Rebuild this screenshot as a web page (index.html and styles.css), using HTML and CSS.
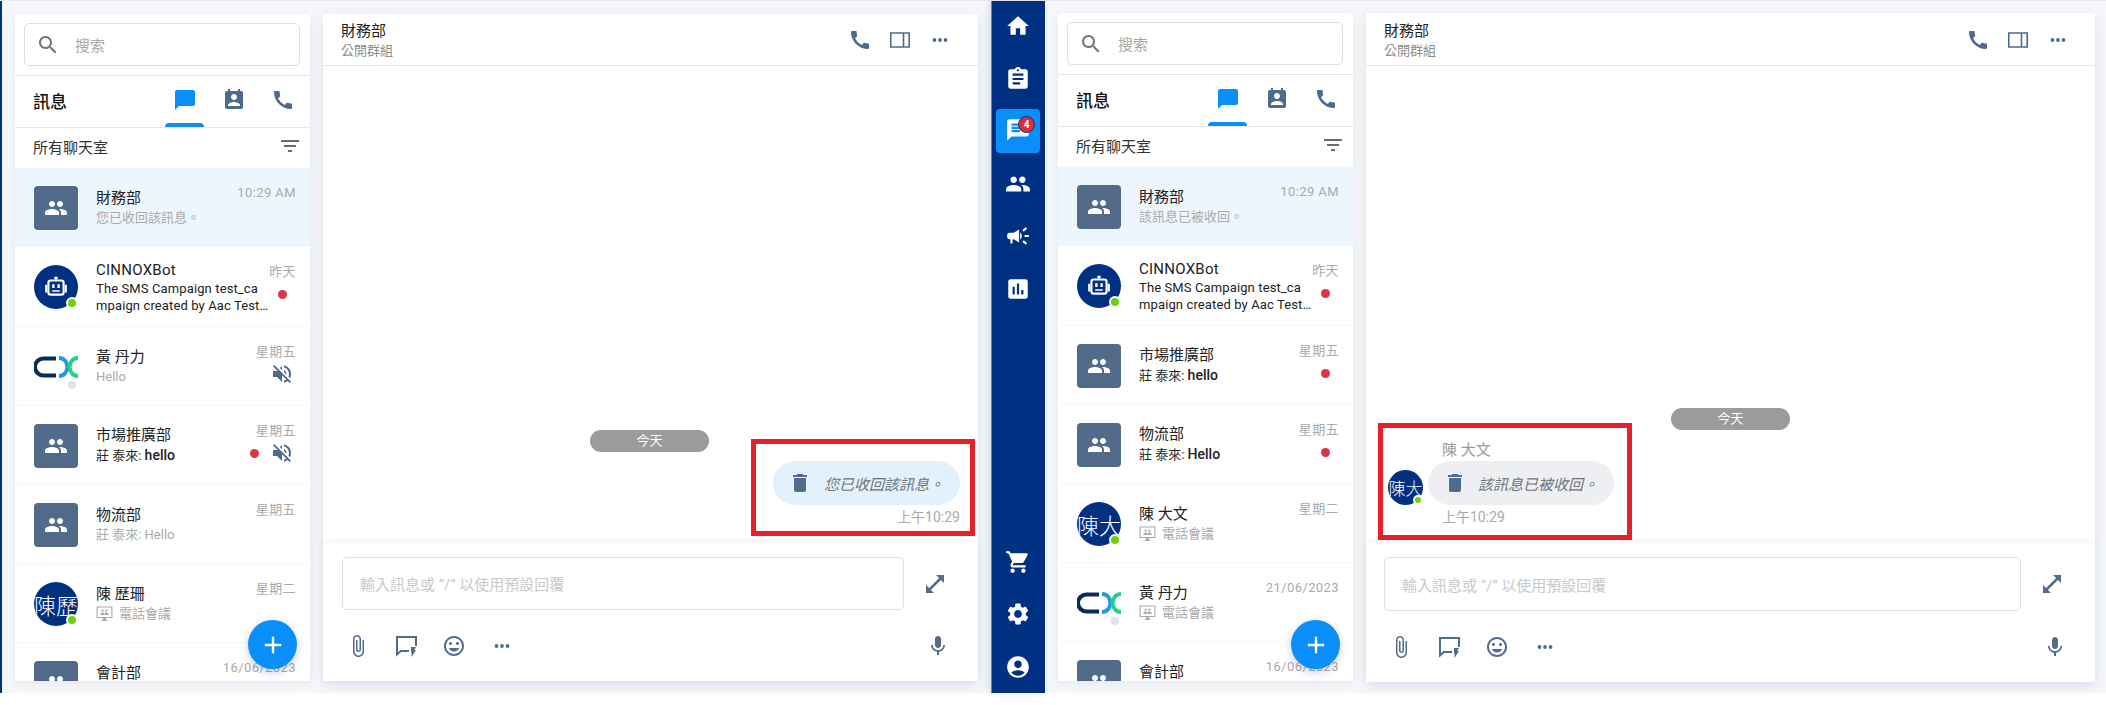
FILE: index.html
```html
<!DOCTYPE html>
<html lang="zh-Hant">
<head>
<meta charset="utf-8">
<title>訊息</title>
<link rel="stylesheet" href="styles.css">
</head>
<body>
<svg class="sprite" xmlns="http://www.w3.org/2000/svg">
  <symbol id="i-home" viewBox="0 0 24 24"><path d="M10 20v-6h4v6h5v-8h3L12 3 2 12h3v8z"/></symbol>
  <symbol id="i-assign" viewBox="0 0 24 24"><path d="M19 3h-4.18C14.4 1.84 13.3 1 12 1c-1.3 0-2.4.84-2.82 2H5c-1.1 0-2 .9-2 2v14c0 1.1.9 2 2 2h14c1.1 0 2-.9 2-2V5c0-1.1-.9-2-2-2zm-7 0c.55 0 1 .45 1 1s-.45 1-1 1-1-.45-1-1 .45-1 1-1zm2 14H7v-2h7v2zm3-4H7v-2h10v2zm0-4H7V7h10v2z"/></symbol>
  <symbol id="i-chat" viewBox="0 0 24 24"><path d="M20 2H4c-1.1 0-1.99.9-1.99 2L2 22l4-4h14c1.1 0 2-.9 2-2V4c0-1.1-.9-2-2-2zM6 9h12v2H6V9zm8 5H6v-2h8v2zm4-6H6V6h12v2z"/></symbol>
  <symbol id="i-msg" viewBox="0 0 24 24"><path d="M20 2H4c-1.1 0-1.99.9-1.99 2L2 22l4-4h14c1.1 0 2-.9 2-2V4c0-1.1-.9-2-2-2z"/></symbol>
  <symbol id="i-people" viewBox="0 0 24 24"><path d="M16 11c1.66 0 2.99-1.34 2.99-3S17.66 5 16 5c-1.66 0-3 1.34-3 3s1.34 3 3 3zm-8 0c1.66 0 2.99-1.34 2.99-3S9.66 5 8 5C6.34 5 5 6.34 5 8s1.34 3 3 3zm0 2c-2.33 0-7 1.17-7 3.5V19h14v-2.5c0-2.33-4.67-3.5-7-3.5zm8 0c-.29 0-.62.02-.97.05 1.16.84 1.97 1.97 1.97 3.45V19h6v-2.5c0-2.33-4.67-3.5-7-3.5z"/></symbol>
  <symbol id="i-campaign" viewBox="0 0 24 24"><path d="M18 11v2h4v-2h-4zm-2 6.61c.96.71 2.21 1.65 3.2 2.39.4-.53.8-1.07 1.2-1.6-.99-.74-2.24-1.68-3.2-2.4-.4.54-.8 1.08-1.2 1.61zM20.4 5.6c-.4-.53-.8-1.07-1.2-1.6-.99.74-2.24 1.68-3.2 2.4.4.53.8 1.07 1.2 1.6.96-.72 2.21-1.65 3.2-2.4zM4 9c-1.1 0-2 .9-2 2v2c0 1.1.9 2 2 2h1v4h2v-4h1l5 3V6L8 9H4zm11.5 3c0-1.33-.58-2.53-1.5-3.35v6.69c.92-.81 1.5-2.01 1.5-3.34z"/></symbol>
  <symbol id="i-chart" viewBox="0 0 24 24"><path d="M19 3H5c-1.1 0-2 .9-2 2v14c0 1.1.9 2 2 2h14c1.1 0 2-.9 2-2V5c0-1.1-.9-2-2-2zM9 17H7v-7h2v7zm4 0h-2V7h2v10zm4 0h-2v-4h2v4z"/></symbol>
  <symbol id="i-cart" viewBox="0 0 24 24"><path d="M7 18c-1.1 0-1.99.9-1.99 2S5.9 22 7 22s2-.9 2-2-.9-2-2-2zM1 2v2h2l3.6 7.59-1.35 2.45c-.16.28-.25.61-.25.96 0 1.1.9 2 2 2h12v-2H7.42c-.14 0-.25-.11-.25-.25l.03-.12.9-1.63h7.45c.75 0 1.41-.41 1.75-1.03l3.58-6.49c.08-.14.12-.31.12-.48 0-.55-.45-1-1-1H5.21l-.94-2H1zm16 16c-1.1 0-1.99.9-1.99 2s.89 2 1.99 2 2-.9 2-2-.9-2-2-2z"/></symbol>
  <symbol id="i-gear" viewBox="0 0 24 24"><path d="M19.14 12.94c.04-.3.06-.61.06-.94 0-.32-.02-.64-.07-.94l2.03-1.58c.18-.14.23-.41.12-.61l-1.92-3.32c-.12-.22-.37-.29-.59-.22l-2.39.96c-.5-.38-1.03-.7-1.62-.94l-.36-2.54c-.04-.24-.24-.41-.48-.41h-3.84c-.24 0-.43.17-.47.41l-.36 2.54c-.59.24-1.13.57-1.62.94l-2.39-.96c-.22-.08-.47 0-.59.22L2.74 8.87c-.12.21-.08.47.12.61l2.03 1.58c-.05.3-.09.63-.09.94s.02.64.07.94l-2.03 1.58c-.18.14-.23.41-.12.61l1.92 3.32c.12.22.37.29.59.22l2.39-.96c.5.38 1.03.7 1.62.94l.36 2.54c.05.24.24.41.48.41h3.84c.24 0 .44-.17.47-.41l.36-2.54c.59-.24 1.13-.56 1.62-.94l2.39.96c.22.08.47 0 .59-.22l1.92-3.32c.12-.22.07-.47-.12-.61l-2.01-1.58zM12 15.6c-1.98 0-3.6-1.62-3.6-3.6s1.62-3.6 3.6-3.6 3.6 1.62 3.6 3.6-1.62 3.6-3.6 3.6z"/></symbol>
  <symbol id="i-account" viewBox="0 0 24 24"><path d="M12 2C6.48 2 2 6.48 2 12s4.48 10 10 10 10-4.48 10-10S17.52 2 12 2zm0 4c1.93 0 3.5 1.57 3.5 3.5S13.93 13 12 13s-3.5-1.57-3.5-3.5S10.07 6 12 6zm0 14c-2.03 0-4.43-.82-6.14-2.88C7.55 15.8 9.68 15 12 15s4.45.8 6.14 2.12C16.43 19.18 14.03 20 12 20z"/></symbol>
  <symbol id="i-search" viewBox="0 0 24 24"><path d="M15.5 14h-.79l-.28-.27C15.41 12.59 16 11.11 16 9.5 16 5.91 13.09 3 9.5 3S3 5.91 3 9.5 5.91 16 9.5 16c1.61 0 3.09-.59 4.23-1.57l.27.28v.79l5 4.99L20.49 19l-4.99-5zm-6 0C7.01 14 5 11.99 5 9.5S7.01 5 9.5 5 14 7.01 14 9.5 11.99 14 9.5 14z"/></symbol>
  <symbol id="i-contact" viewBox="0 0 24 24"><path d="M19 3h-1V1h-2v2H8V1H6v2H5c-1.11 0-2 .9-2 2v14c0 1.1.89 2 2 2h14c1.1 0 2-.9 2-2V5c0-1.1-.9-2-2-2zm-7 3c1.66 0 3 1.34 3 3s-1.34 3-3 3-3-1.34-3-3 1.34-3 3-3zm6 12H6v-1c0-2 4-3.1 6-3.1s6 1.1 6 3.1v1z"/></symbol>
  <symbol id="i-phone" viewBox="0 0 24 24"><path d="M20.01 15.38c-1.23 0-2.42-.2-3.53-.56-.35-.12-.74-.03-1.01.24l-1.57 1.97c-2.83-1.35-5.48-3.9-6.89-6.83l1.95-1.66c.27-.28.35-.67.24-1.02-.37-1.11-.56-2.3-.56-3.53 0-.54-.45-.99-.99-.99H4.19C3.65 3 3 3.24 3 3.99 3 13.28 10.73 21 20.01 21c.71 0 .99-.63.99-1.18v-3.45c0-.54-.45-.99-.99-.99z"/></symbol>
  <symbol id="i-filter" viewBox="0 0 24 24"><path d="M10 18h4v-2h-4v2zM3 6v2h18V6H3zm3 7h12v-2H6v2z"/></symbol>
  <symbol id="i-trash" viewBox="0 0 24 24"><path d="M6 19c0 1.1.9 2 2 2h8c1.1 0 2-.9 2-2V7H6v12zM19 4h-3.5l-1-1h-5l-1 1H5v2h14V4z"/></symbol>
  <symbol id="i-add" viewBox="0 0 24 24"><path d="M19 13h-6v6h-2v-6H5v-2h6V5h2v6h6v2z"/></symbol>
  <symbol id="i-attach" viewBox="0 0 24 24"><path d="M16.5 6v11.5c0 2.21-1.79 4-4 4s-4-1.79-4-4V5c0-1.38 1.12-2.5 2.5-2.5s2.5 1.12 2.5 2.5v10.5c0 .55-.45 1-1 1s-1-.45-1-1V6H10v9.5c0 1.38 1.12 2.5 2.5 2.5s2.5-1.12 2.5-2.5V5c0-2.21-1.79-4-4-4S7 2.79 7 5v12.5c0 3.04 2.46 5.5 5.5 5.5s5.5-2.46 5.5-5.5V6h-1.5z"/></symbol>
  <symbol id="i-emoji" viewBox="0 0 24 24"><path d="M11.99 2C6.47 2 2 6.48 2 12s4.47 10 9.99 10C17.52 22 22 17.52 22 12S17.52 2 11.99 2zM12 20c-4.42 0-8-3.58-8-8s3.58-8 8-8 8 3.58 8 8-3.58 8-8 8zm3.5-9c.83 0 1.5-.67 1.5-1.5S16.33 8 15.5 8 14 8.67 14 9.5s.67 1.5 1.5 1.5zm-7 0c.83 0 1.5-.67 1.5-1.5S9.33 8 8.5 8 7 8.67 7 9.5 7.67 11 8.5 11zm3.5 6.5c2.33 0 4.31-1.46 5.11-3.5H6.89c.8 2.04 2.78 3.5 5.11 3.5z"/></symbol>
  <symbol id="i-mic" viewBox="0 0 24 24"><path d="M12 14c1.66 0 2.99-1.34 2.99-3L15 5c0-1.66-1.34-3-3-3S9 3.34 9 5v6c0 1.66 1.34 3 3 3zm5.3-3c0 3-2.54 5.1-5.3 5.1S6.7 14 6.7 11H5c0 3.41 2.72 6.23 6 6.72V21h2v-3.28c3.28-.48 6-3.3 6-6.72h-1.7z"/></symbol>
  <symbol id="i-expand" viewBox="0 0 24 24"><path d="M21 3h-8l3.1 3.1L6.1 16.1 3 13v8h8l-3.1-3.1 10-10L21 11z"/></symbol>
  <symbol id="i-mute" viewBox="0 0 24 24"><path d="M16.5 12c0-1.77-1.02-3.29-2.5-4.03v2.21l2.45 2.45c.03-.2.05-.41.05-.63zm2.5 0c0 .94-.2 1.82-.54 2.64l1.51 1.51C20.63 14.91 21 13.5 21 12c0-4.28-2.99-7.86-7-8.77v2.06c2.89.86 5 3.54 5 6.71zM4.27 3L3 4.27 7.73 9H3v6h4l5 5v-6.73l4.25 4.25c-.67.52-1.42.93-2.25 1.18v2.06c1.38-.31 2.63-.95 3.69-1.81L19.73 21 21 19.73l-9-9L4.27 3zM12 4L9.91 6.09 12 8.18V4z"/></symbol>
  <symbol id="i-more" viewBox="0 0 24 24"><circle cx="6.5" cy="12" r="1.9"/><circle cx="12" cy="12" r="1.9"/><circle cx="17.5" cy="12" r="1.9"/></symbol>
  <symbol id="i-panel" viewBox="0 0 24 24"><path fill="none" stroke="currentColor" stroke-width="1.6" d="M2.8 5h18.4v14H2.8zM15.5 5v14"/></symbol>
  <symbol id="i-quick" viewBox="0 0 24 24"><path fill="none" stroke="currentColor" stroke-width="2" d="M22 12V3H3v17.5L6.8 17H15"/><path d="M17 13h5l-1.8 3H22l-4.5 7v-5H17z"/></symbol>
  <symbol id="i-meet" viewBox="0 0 18 16"><path fill="none" stroke="currentColor" stroke-width="1.2" d="M1.1 1.1h15.8v11.2H1.1z"/><path d="M6 14.6h6V16H6zM7.5 12h3v3h-3z"/><circle cx="7" cy="5" r="1.2"/><circle cx="11" cy="5" r="1.2"/><path d="M4.5 9.5c0-1.7 1.4-2.5 2.5-2.5s2 .5 2 2.5zM9.6 9.5c0-1-.3-1.8-.8-2.3.7-.3 1.5-.2 2.2-.2 1.1 0 2.5.8 2.5 2.5z"/></symbol>
  <symbol id="i-robot" viewBox="0 0 24 24"><path d="M10.500 2.500h3V5h-3zM2 10h2v7H2zM20 10h2v7h-2z"/><path fill-rule="evenodd" d="M7 5h10a3 3 0 0 1 3 3v9a3 3 0 0 1-3 3H7a3 3 0 0 1-3-3V8a3 3 0 0 1 3-3zm0 2a1 1 0 0 0-1 1v9a1 1 0 0 0 1 1h10a1 1 0 0 0 1-1V8a1 1 0 0 0-1-1z"/><path d="M8.500 9.500h2.200v3.500H8.500zM13.300 9.500h2.200v3.500h-2.200zM8.500 15h7v1.400h-7z"/></symbol>
  <symbol id="i-cx" viewBox="0 0 44 44"><path fill="none" stroke="#0b2b5c" stroke-width="4" d="M22 13.500H9.500a8 8 0 0 0 0 17H22"/><path fill="none" stroke="#1e9be8" stroke-width="4" d="M25 13c5 0 8 4 8.500 9 -.5 5-3.500 9-8.500 9"/><path fill="none" stroke="#22d08a" stroke-width="4" d="M44 13c-5 0-8 4-8.500 9 .5 5 3.500 9 8.500 9"/></symbol>
</svg>

<main class="screens">
  <section class="screen screen-a">
    <aside class="sidebar">
      <div class="search-wrap"><div class="search"><svg class="ico ico-search"><use href="#i-search"/></svg><span>搜索</span></div></div>
      <div class="tabs">
        <h1 class="tabs-title">訊息</h1>
        <div class="tab-list">
          <span class="tab tab-on"><svg class="ico"><use href="#i-msg"/></svg></span>
          <span class="tab"><svg class="ico"><use href="#i-contact"/></svg></span>
          <span class="tab"><svg class="ico"><use href="#i-phone"/></svg></span>
        </div>
      </div>
      <div class="filter"><span>所有聊天室</span><svg class="ico ico-filter"><use href="#i-filter"/></svg></div>
      <ul class="list">
        <li class="item item-on">
          <div class="av av-group"><svg class="ico"><use href="#i-people"/></svg></div>
          <div class="item-body"><div class="name">財務部</div><div class="sub">您已收回該訊息。</div></div>
          <div class="meta"><time class="stamp">10:29 AM</time></div>
        </li>
        <li class="item">
          <div class="av av-round"><div class="av-fill"><svg class="ico ico-robot"><use href="#i-robot"/></svg></div><i class="status"></i></div>
          <div class="item-body"><div class="name name-latin">CINNOXBot</div><div class="sub sub-two">The SMS Campaign test_campaign created by Aac Test Test Campaign</div></div>
          <div class="meta"><time class="stamp">昨天</time><div class="flags"><i class="dot"></i></div></div>
        </li>
        <li class="item">
          <div class="av av-logo"><svg class="cx"><use href="#i-cx"/></svg><i class="status status-off"></i></div>
          <div class="item-body"><div class="name">黃 丹力</div><div class="sub">Hello</div></div>
          <div class="meta"><time class="stamp">星期五</time><div class="flags"><svg class="ico ico-mute"><use href="#i-mute"/></svg></div></div>
        </li>
        <li class="item">
          <div class="av av-group"><svg class="ico"><use href="#i-people"/></svg></div>
          <div class="item-body"><div class="name">市場推廣部</div><div class="sub sub-new">莊 泰來: <span class="strong">hello</span></div></div>
          <div class="meta"><time class="stamp">星期五</time><div class="flags"><i class="dot dot-mid"></i><svg class="ico ico-mute"><use href="#i-mute"/></svg></div></div>
        </li>
        <li class="item">
          <div class="av av-group"><svg class="ico"><use href="#i-people"/></svg></div>
          <div class="item-body"><div class="name">物流部</div><div class="sub">莊 泰來: Hello</div></div>
          <div class="meta"><time class="stamp">星期五</time></div>
        </li>
        <li class="item">
          <div class="av av-round"><div class="av-fill av-text">陳歷</div><i class="status"></i></div>
          <div class="item-body"><div class="name">陳 歷珊</div><div class="sub sub-meet"><svg class="ico-meet"><use href="#i-meet"/></svg>電話會議</div></div>
          <div class="meta"><time class="stamp">星期二</time></div>
        </li>
        <li class="item">
          <div class="av av-group"><svg class="ico"><use href="#i-people"/></svg></div>
          <div class="item-body"><div class="name">會計部</div><div class="sub">&nbsp;</div></div>
          <div class="meta"><time class="stamp">16/06/2023</time></div>
        </li>
      </ul>
      <button class="fab"><svg class="ico"><use href="#i-add"/></svg></button>
    </aside>
    <div class="chat">
      <header class="chat-head">
        <div class="chat-title"><div class="chat-name">財務部</div><div class="chat-type">公開群組</div></div>
        <div class="head-tools">
          <svg class="ico"><use href="#i-phone"/></svg><svg class="ico"><use href="#i-panel"/></svg><svg class="ico"><use href="#i-more"/></svg>
        </div>
      </header>
      <div class="chat-body">
        <div class="pill pill-a">今天</div>
        <div class="mark mark-out">
          <div class="bubble bubble-out"><svg class="ico ico-trash"><use href="#i-trash"/></svg><em>您已收回該訊息。</em></div>
          <time class="msg-time">上午10:29</time>
        </div>
      </div>
      <footer class="composer">
        <div class="input-row"><div class="input">輸入訊息或 “/” 以使用預設回覆</div><svg class="ico"><use href="#i-expand"/></svg></div>
        <div class="tool-row">
          <svg class="ico"><use href="#i-attach"/></svg><svg class="ico"><use href="#i-quick"/></svg><svg class="ico"><use href="#i-emoji"/></svg><svg class="ico"><use href="#i-more"/></svg>
          <svg class="ico ico-mic"><use href="#i-mic"/></svg>
        </div>
      </footer>
    </div>
  </section>

  <section class="screen screen-b">
    <nav class="rail">
      <div class="rail-group">
        <a class="rail-item"><svg class="ico"><use href="#i-home"/></svg></a>
        <a class="rail-item"><svg class="ico"><use href="#i-assign"/></svg></a>
        <a class="rail-item rail-on"><svg class="ico"><use href="#i-chat"/></svg><b class="badge">4</b></a>
        <a class="rail-item"><svg class="ico"><use href="#i-people"/></svg></a>
        <a class="rail-item"><svg class="ico"><use href="#i-campaign"/></svg></a>
        <a class="rail-item"><svg class="ico"><use href="#i-chart"/></svg></a>
      </div>
      <div class="rail-group">
        <a class="rail-item"><svg class="ico"><use href="#i-cart"/></svg></a>
        <a class="rail-item"><svg class="ico"><use href="#i-gear"/></svg></a>
        <a class="rail-item"><svg class="ico"><use href="#i-account"/></svg></a>
      </div>
    </nav>
    <aside class="sidebar sidebar-b">
      <div class="search-wrap"><div class="search"><svg class="ico ico-search"><use href="#i-search"/></svg><span>搜索</span></div></div>
      <div class="tabs">
        <h1 class="tabs-title">訊息</h1>
        <div class="tab-list">
          <span class="tab tab-on"><svg class="ico"><use href="#i-msg"/></svg></span>
          <span class="tab"><svg class="ico"><use href="#i-contact"/></svg></span>
          <span class="tab"><svg class="ico"><use href="#i-phone"/></svg></span>
        </div>
      </div>
      <div class="filter"><span>所有聊天室</span><svg class="ico ico-filter"><use href="#i-filter"/></svg></div>
      <ul class="list">
        <li class="item item-on">
          <div class="av av-group"><svg class="ico"><use href="#i-people"/></svg></div>
          <div class="item-body"><div class="name">財務部</div><div class="sub">該訊息已被收回。</div></div>
          <div class="meta"><time class="stamp">10:29 AM</time></div>
        </li>
        <li class="item">
          <div class="av av-round"><div class="av-fill"><svg class="ico ico-robot"><use href="#i-robot"/></svg></div><i class="status"></i></div>
          <div class="item-body"><div class="name name-latin">CINNOXBot</div><div class="sub sub-two">The SMS Campaign test_campaign created by Aac Test Test Campaign</div></div>
          <div class="meta"><time class="stamp">昨天</time><div class="flags"><i class="dot"></i></div></div>
        </li>
        <li class="item">
          <div class="av av-group"><svg class="ico"><use href="#i-people"/></svg></div>
          <div class="item-body"><div class="name">市場推廣部</div><div class="sub sub-new">莊 泰來: <span class="strong">hello</span></div></div>
          <div class="meta"><time class="stamp">星期五</time><div class="flags"><i class="dot"></i></div></div>
        </li>
        <li class="item">
          <div class="av av-group"><svg class="ico"><use href="#i-people"/></svg></div>
          <div class="item-body"><div class="name">物流部</div><div class="sub sub-new">莊 泰來: <span class="strong">Hello</span></div></div>
          <div class="meta"><time class="stamp">星期五</time><div class="flags"><i class="dot"></i></div></div>
        </li>
        <li class="item">
          <div class="av av-round"><div class="av-fill av-text">陳大</div><i class="status"></i></div>
          <div class="item-body"><div class="name">陳 大文</div><div class="sub sub-meet"><svg class="ico-meet"><use href="#i-meet"/></svg>電話會議</div></div>
          <div class="meta"><time class="stamp">星期二</time></div>
        </li>
        <li class="item">
          <div class="av av-logo"><svg class="cx"><use href="#i-cx"/></svg><i class="status status-off"></i></div>
          <div class="item-body"><div class="name">黃 丹力</div><div class="sub sub-meet"><svg class="ico-meet"><use href="#i-meet"/></svg>電話會議</div></div>
          <div class="meta"><time class="stamp">21/06/2023</time></div>
        </li>
        <li class="item">
          <div class="av av-group"><svg class="ico"><use href="#i-people"/></svg></div>
          <div class="item-body"><div class="name">會計部</div><div class="sub">&nbsp;</div></div>
          <div class="meta"><time class="stamp">16/06/2023</time></div>
        </li>
      </ul>
      <button class="fab"><svg class="ico"><use href="#i-add"/></svg></button>
    </aside>
    <div class="chat">
      <header class="chat-head">
        <div class="chat-title"><div class="chat-name">財務部</div><div class="chat-type">公開群組</div></div>
        <div class="head-tools">
          <svg class="ico"><use href="#i-phone"/></svg><svg class="ico"><use href="#i-panel"/></svg><svg class="ico"><use href="#i-more"/></svg>
        </div>
      </header>
      <div class="chat-body chat-body-b">
        <div class="pill pill-b">今天</div>
        <div class="mark mark-in">
          <div class="av-small"><div class="av-fill av-text av-text-sm">陳大</div><i class="status status-sm"></i></div>
          <div class="msg-col">
            <div class="msg-author">陳 大文</div>
            <div class="bubble bubble-in"><svg class="ico ico-trash"><use href="#i-trash"/></svg><em>該訊息已被收回。</em></div>
            <time class="msg-time msg-time-in">上午10:29</time>
          </div>
        </div>
      </div>
      <footer class="composer">
        <div class="input-row"><div class="input">輸入訊息或 “/” 以使用預設回覆</div><svg class="ico"><use href="#i-expand"/></svg></div>
        <div class="tool-row">
          <svg class="ico"><use href="#i-attach"/></svg><svg class="ico"><use href="#i-quick"/></svg><svg class="ico"><use href="#i-emoji"/></svg><svg class="ico"><use href="#i-more"/></svg>
          <svg class="ico ico-mic"><use href="#i-mic"/></svg>
        </div>
      </footer>
    </div>
  </section>
</main>
</body>
</html>
```
FILE: styles.css
```css
* { box-sizing: border-box; }
html, body { margin: 0; padding: 0; background: #fff; }
body {
  width: 2106px;
  height: 705px;
  overflow: hidden;
  font-family: Roboto, "Noto Sans CJK TC", sans-serif;
  color: #222;
}
.sprite { display: none; }
.ico { width: 24px; height: 24px; fill: currentColor; flex: none; display: block; }

.screens {
  display: flex;
  height: 693px;
  background: #f5f7fb;
  border-top: 1px solid #e9ebef;
}
.screen { display: flex; gap: 13px; }
.screen-a {
  width: 991px;
  padding: 13px 13px 12px 13px;
  border-left: 2px solid #003082;
}
.screen-b { flex: 1; padding: 0 11px 0 0; }

/* nav rail */
.rail {
  width: 54px;
  flex: none;
  background: #003082;
  padding: 3px 5px 4px 4px;
  display: flex;
  flex-direction: column;
  justify-content: space-between;
  color: #fff;
  border-left: 1px solid #7c7f86;
  box-shadow: -3px 0 6px rgba(40, 50, 70, .12);
}
.rail-group { display: flex; flex-direction: column; gap: 8.6px; }
.rail-item {
  position: relative;
  height: 44px;
  border-radius: 4px;
  display: flex;
  align-items: center;
  justify-content: center;
}
.rail-item .ico { width: 26px; height: 26px; }
.rail-on { background: #0a8ffa; }
.rail-on .ico { margin-top: -3px; }
.badge {
  position: absolute;
  left: 22px;
  top: 7px;
  width: 17px;
  height: 17px;
  border-radius: 50%;
  background: #d5303e;
  border: 1px solid #0e2f70;
  font-size: 10px;
  line-height: 15px;
  text-align: center;
  font-weight: 700;
  color: #fff;
}

/* sidebar */
.sidebar {
  position: relative;
  width: 295px;
  flex: none;
  background: #fff;
  border-radius: 4px 4px 0 0;
  box-shadow: 0 3px 10px rgba(40, 60, 100, .08);
  display: flex;
  flex-direction: column;
  overflow: hidden;
}
.sidebar-b { margin: 12px 0 12px; }
.search-wrap { height: 62px; padding: 9px 10px 0 9px; border-bottom: 1px solid #e6e7ea; flex: none; }
.search {
  height: 43px;
  border: 1px solid #dcdde0;
  border-radius: 5px;
  display: flex;
  align-items: center;
  gap: 15px;
  padding-left: 11px;
  font-size: 15px;
  color: #a8a8a8;
}
.ico-search { color: #757575; }
.tabs {
  height: 52px;
  flex: none;
  display: flex;
  align-items: center;
  padding: 0 8px 0 18px;
  border-bottom: 1px solid #e6e7ea;
}
.tabs-title { margin: 0 auto 0 0; font-size: 17px; font-weight: 500; color: #111; line-height: 24px; }
.tab-list { display: flex; gap: 10px; height: 100%; }
.tab {
  position: relative;
  width: 39px;
  display: flex;
  align-items: center;
  justify-content: center;
  padding-bottom: 4px;
  color: #4f6a8f;
}
.tab-on { color: #0a8ffa; }
.tab-on::after {
  content: "";
  position: absolute;
  left: 0;
  right: 0;
  bottom: 0;
  height: 4px;
  border-radius: 4px 4px 0 0;
  background: #0a8ffa;
}
.filter {
  height: 40px;
  flex: none;
  display: flex;
  align-items: center;
  justify-content: space-between;
  padding: 0 8px 4px 18px;
  font-size: 15px;
  color: #333;
}
.ico-filter { color: #6b6b6b; }

.list { list-style: none; margin: 0; padding: 0; flex: 1; min-height: 0; overflow: hidden; }
.item {
  height: 79px;
  padding: 1px 14px 0 19px;
  border-bottom: 1px solid #f7f8fa;
  display: flex;
  align-items: center;
}
.item:nth-child(2) { height: 80px; padding-bottom: 1px; }
.item-on { background: #eef6fd; border-bottom-color: #eef6fd; }

.av { position: relative; width: 44px; height: 44px; flex: none; margin-right: 18px; }
.av-group {
  background: #536b8b;
  border-radius: 4px;
  color: #fff;
  display: flex;
  align-items: center;
  justify-content: center;
}
.av-fill {
  width: 100%;
  height: 100%;
  border-radius: 50%;
  background: #003082;
  color: #fff;
  display: flex;
  align-items: center;
  justify-content: center;
  overflow: hidden;
}
.ico-robot { width: 26px; height: 26px; }
.av-text { font-size: 22px; white-space: nowrap; font-weight: 300; }
.cx { width: 44px; height: 44px; display: block; }
.status {
  position: absolute;
  right: 0;
  bottom: 0;
  width: 12px;
  height: 12px;
  border-radius: 50%;
  background: #6fcf0b;
  border: 2px solid #fff;
}
.status-off { background: #dfe1e5; bottom: -2px; }
.status-sm { width: 10px; height: 10px; }

.item-body { flex: 1 1 0; min-width: 0; }
.name { font-size: 15px; line-height: 20px; color: #222; white-space: nowrap; }
.name-latin { letter-spacing: .25px; }
.sub { font-size: 13px; line-height: 20px; color: #aaa; white-space: nowrap; }
.sub-new { color: #222; }
.strong { font-size: 14px; font-weight: 500; }
.sub-two {
  font-size: 13px;
  letter-spacing: .12px;
  line-height: 17px;
  color: #222;
  white-space: normal;
  word-break: break-all;
  display: -webkit-box;
  -webkit-box-orient: vertical;
  -webkit-line-clamp: 2;
  overflow: hidden;
}
.sub-meet { display: flex; align-items: center; gap: 6px; }
.ico-meet { width: 17px; height: 15px; fill: currentColor; flex: none; }

.meta {
  flex: none;
  align-self: flex-start;
  padding-top: 16px;
  display: flex;
  flex-direction: column;
  align-items: flex-end;
  white-space: nowrap;
}
.stamp { font-size: 13px; letter-spacing: .4px; line-height: 16px; color: #aaa; }
.flags { height: 22px; margin-top: 3px; display: flex; align-items: center; gap: 11px; }
.dot { width: 9px; height: 9px; border-radius: 50%; background: #dc3545; margin-right: 9px; }
.dot-mid { margin-right: 0; }
.ico-mute { width: 24px; height: 24px; color: #4f6a8f; margin-right: 2px; }

.fab {
  position: absolute;
  right: 13px;
  bottom: 12px;
  width: 49px;
  height: 49px;
  border: 0;
  border-radius: 50%;
  padding: 0;
  background: #0a8ffa;
  color: #fff;
  display: flex;
  align-items: center;
  justify-content: center;
  box-shadow: 0 3px 8px rgba(40, 60, 100, .25);
}
.fab .ico { width: 28px; height: 28px; }

/* chat */
.chat {
  flex: 1;
  min-width: 0;
  background: #fff;
  box-shadow: 0 4px 12px rgba(40, 60, 100, .12);
  display: flex;
  flex-direction: column;
}
.screen-b .chat { margin: 12px 0 11px; }
.chat-head {
  height: 52px;
  flex: none;
  display: flex;
  align-items: center;
  justify-content: space-between;
  padding: 1px 26px 0 18px;
  border-bottom: 1px solid #e6e7ea;
}
.screen-b .chat-head { height: 53px; padding-right: 25px; }
.chat-title { padding-top: 2px; }
.chat-name { font-size: 15px; line-height: 20px; color: #222; }
.chat-type { font-size: 13px; line-height: 20px; color: #8d8d8d; }
.head-tools { display: flex; gap: 16px; color: #4f6a8f; }

.chat-body {
  flex: 1;
  min-height: 0;
  display: flex;
  flex-direction: column;
  justify-content: flex-end;
  padding-right: 3px;
}
.chat-body-b { padding: 0 0 3px 12px; }
.pill {
  align-self: center;
  width: 119px;
  height: 22px;
  border-radius: 11px;
  background: #9b9b9b;
  color: #fff;
  font-size: 13px;
  line-height: 22px;
  text-align: center;
  flex: none;
}
.pill-a { margin: 0 0 -13px 1px; }
.pill-b { margin: 0 0 -7px -12px; }
.mark { border: 5px solid #e8202a; flex: none; }
.mark-out {
  align-self: flex-end;
  margin-bottom: 7px;
  padding: 17px 10px 6px 17px;
  display: flex;
  flex-direction: column;
  align-items: flex-end;
}
.mark-in {
  align-self: flex-start;
  padding: 12px 13px 10px 5px;
  display: flex;
  align-items: flex-end;
}
.bubble {
  height: 44px;
  border-radius: 22px;
  padding: 0 16px;
  display: flex;
  align-items: center;
  gap: 13px;
  font-size: 15px;
  color: #6f7378;
}
.bubble em { font-style: italic; white-space: nowrap; }
.bubble-out { background: #e3f1fd; }
.bubble-in { background: #eeeff3; gap: 12px; margin-top: 1px; }
.ico-trash { color: #536b8b; width: 24px; height: 24px; margin: 0 -1px; }
.msg-time { font-size: 14px; line-height: 16px; margin-top: 4px; color: #aaa; }
.msg-time-in { display: block; margin: 4px 0 0 14px; }
.av-small { position: relative; width: 35px; height: 35px; margin: 0 5px 20px 0; flex: none; }
.av-text-sm { font-size: 17px; }
.msg-author { font-size: 15px; line-height: 20px; color: #999; padding-left: 14px; }

.composer {
  height: 138px;
  flex: none;
  background: #fff;
  padding: 14px 28px 0 19px;
  box-shadow: 0 -2px 6px rgba(40, 60, 100, .06);
  position: relative;
}
.screen-b .composer { height: 139px; padding-left: 18px; }
.input-row { display: flex; align-items: center; gap: 19px; padding-right: 3px; color: #536b8b; }
.input {
  flex: 1;
  height: 53px;
  border: 1px solid #dfe0e3;
  border-radius: 5px;
  padding-left: 17px;
  display: flex;
  align-items: center;
  font-size: 15px;
  color: #c9c9c9;
}
.screen-b .input { height: 54px; }
.tool-row { display: flex; align-items: center; gap: 24px; margin-top: 24px; padding-left: 4px; color: #536b8b; }
.screen-b .tool-row { padding-left: 5px; }
.ico-mic { margin-left: auto; }
```
